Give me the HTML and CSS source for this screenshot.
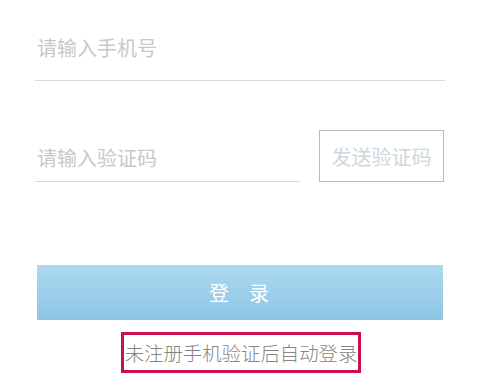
FILE: index.html
```html
<!DOCTYPE html>
<html lang="zh-CN">
<head>
<meta charset="utf-8">
<title>登录</title>
<link rel="stylesheet" href="styles.css">
</head>
<body>
<div class="form">
  <div class="field phone">请输入手机号</div>
  <div class="code-row">
    <div class="field code">请输入验证码</div>
    <div class="send">发送验证码</div>
  </div>
  <div class="login">登录</div>
  <div class="note-wrap"><span class="note">未注册手机验证后自动登录</span></div>
</div>
</body>
</html>
```
FILE: styles.css
```css
html, body {
  margin: 0;
  background: #ffffff;
}
body {
  width: 480px;
  height: 392px;
  overflow: hidden;
  font-family: "Noto Sans CJK SC", "Noto Sans", sans-serif;
}
.form {
  padding: 38px 35px 0 35px;
  display: flex;
  flex-direction: column;
}
.field {
  font-size: 20px;
  line-height: 20px;
  color: #c8c8c8;
  padding-left: 2px;
  border-bottom: 1px solid #d6dde1;
}
.phone {
  width: 408px;
  padding-bottom: 22px;
}
.code-row {
  margin-top: 49px;
  display: flex;
  align-items: flex-start;
  gap: 19px;
}
.code {
  width: 263px;
  padding-top: 18px;
  padding-bottom: 13px;
}
.send {
  width: 123px;
  height: 50px;
  border: 1px solid #b3bcc1;
  display: flex;
  align-items: center;
  justify-content: center;
  font-size: 20px;
  color: #cdd7dd;
}
.login {
  margin: 83px 0 0 2px;
  width: 406px;
  height: 55px;
  background: linear-gradient(#abd9ef, #8dc5e6);
  color: #ffffff;
  font-size: 20px;
  letter-spacing: 20px;
  padding-left: 18px;
  box-sizing: border-box;
  display: flex;
  align-items: center;
  justify-content: center;
}
.note-wrap {
  margin-top: 12px;
  display: flex;
  justify-content: center;
  padding-left: 2px;
}
.note {
  border: 3px solid #c8104a;
  padding: 6px 1px;
  font-size: 19.4px;
  line-height: 23px;
  color: #858585;
  font-weight: 300;
}
```
